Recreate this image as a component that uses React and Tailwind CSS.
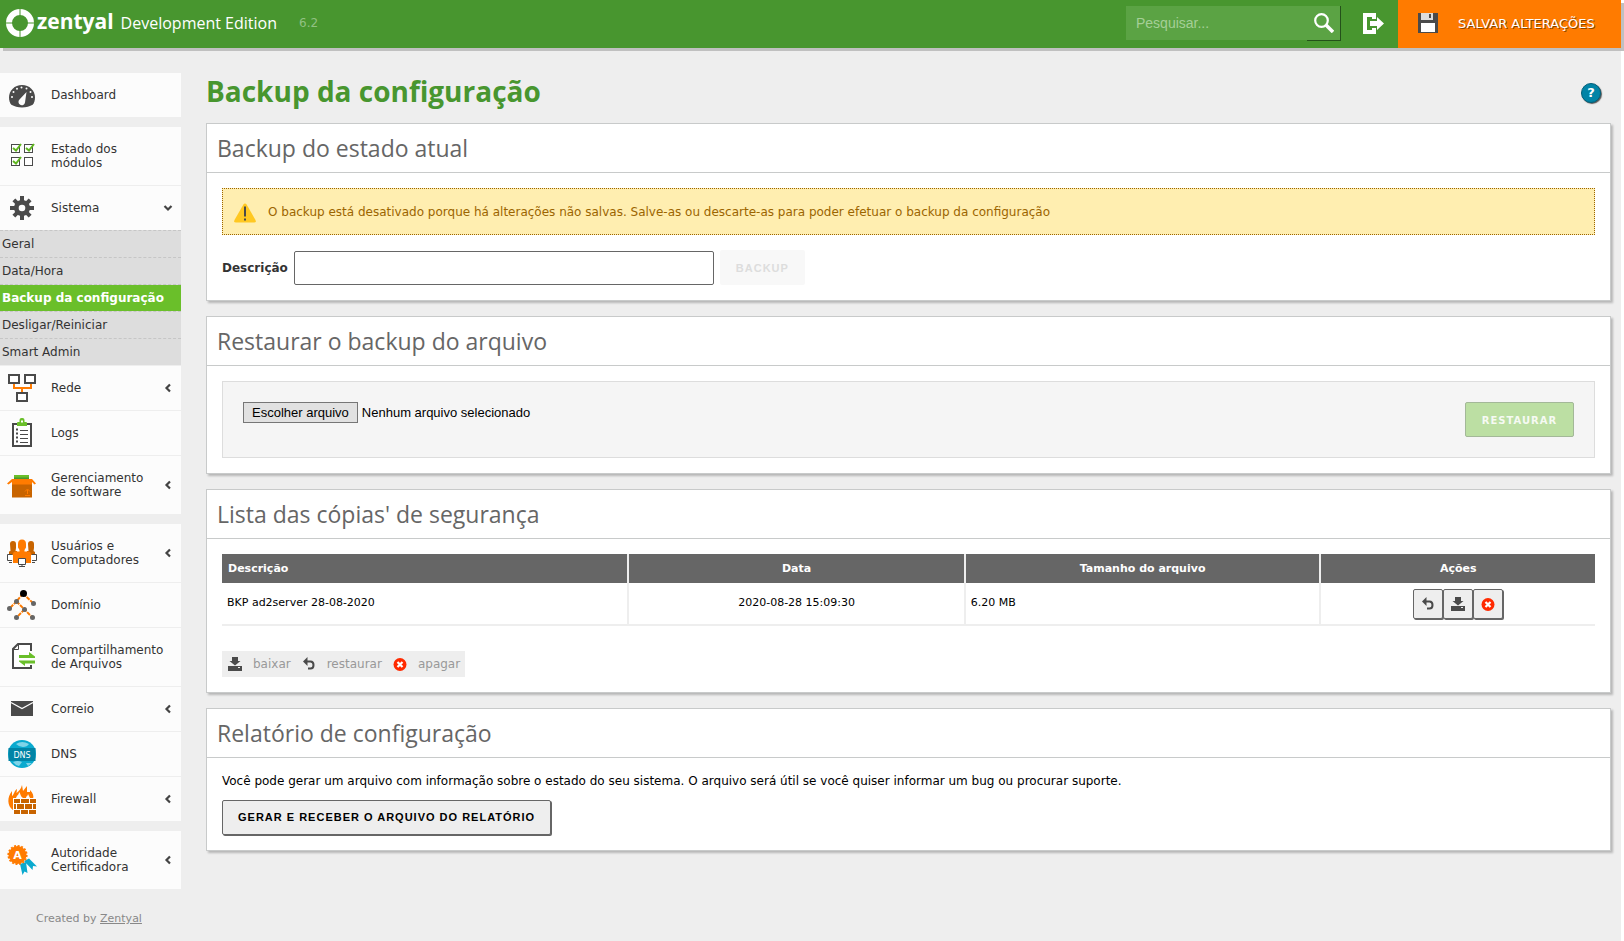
const VERDANA = "font-['DejaVu_Sans',Verdana,sans-serif]";

/* ---------- icons of the side menu, all on a 32px grid ---------- */

function MenuIcon({ children }) {
  return (
    <svg viewBox="0 0 32 32" className="size-8 shrink-0" aria-hidden="true">
      {children}
    </svg>
  );
}

const DashboardIcon = () => (
  <MenuIcon>
    <path d="M16 6C8.600 6 3 11.500 3 18.500c0 3 .8 5.300 2.300 7.200C8 27.200 12 28.500 16 28.500s8-1.300 10.700-2.800c1.500-1.900 2.300-4.200 2.300-7.200C29 11.500 23.400 6 16 6z" fill="#4a4a4a" />
    <g fill="#fcfcfc">
      <circle cx="6" cy="18" r="1" /><circle cx="7.500" cy="13" r="1" /><circle cx="11" cy="9.700" r="1" />
      <circle cx="15.500" cy="8.500" r="1" /><circle cx="20.500" cy="9.500" r="1" /><circle cx="24.500" cy="13" r="1" /><circle cx="26" cy="18" r="1" />
      <path d="M20.500 13l-1.500 10.500a3.300 3.300 0 1 1-5.500-3z" />
    </g>
    <circle cx="15.800" cy="23.300" r="1.200" fill="#fcfcfc" />
  </MenuIcon>
);

const ModulesIcon = () => (
  <MenuIcon>
    <g fill="#fff" stroke="#4a4a4a" strokeWidth="1">
      <rect x="5.500" y="4.500" width="8" height="8" /><rect x="18.500" y="4.500" width="8" height="8" />
      <rect x="5.500" y="17.500" width="8" height="8" /><rect x="18.500" y="17.500" width="8" height="8" />
    </g>
    <g fill="none" stroke="#5fb71f" strokeWidth="2">
      <path d="M7 8l3 2.500 5-6.500M20 8l3 2.500 5-6.500M7 21l3 2.500 5-6.500" />
    </g>
  </MenuIcon>
);

const GearIcon = () => (
  <MenuIcon>
    <g fill="#4a4a4a">
      <rect x="14" y="4" width="4" height="24" /><rect x="4" y="14" width="24" height="4" />
      <rect x="14" y="4.500" width="4" height="23" transform="rotate(45 16 16)" />
      <rect x="14" y="4.500" width="4" height="23" transform="rotate(-45 16 16)" />
      <circle cx="16" cy="16" r="8" />
    </g>
    <circle cx="16" cy="16" r="3.300" fill="#fcfcfc" />
  </MenuIcon>
);

const NetworkIcon = () => (
  <MenuIcon>
    <path d="M8 12v4h17v-4M16 16v4" fill="none" stroke="#ff7b00" strokeWidth="2" />
    <g fill="#fff" stroke="#4a4a4a" strokeWidth="2">
      <rect x="3" y="3" width="10" height="8" /><rect x="19" y="3" width="10" height="8" /><rect x="11" y="21" width="10" height="8" />
    </g>
  </MenuIcon>
);

const LogsIcon = () => (
  <MenuIcon>
    <rect x="7" y="7" width="18" height="22" fill="#fff" stroke="#4a4a4a" strokeWidth="2" />
    <path d="M10 12.500h2M10 16.500h2M10 20.500h2M10 24.500h2" stroke="#4a4a4a" strokeWidth="2" />
    <path d="M14 13.500h8M14 17.500h8M14 21.500h8M14 25.500h8" stroke="#4a4a4a" strokeWidth="1" />
    <path d="M11 9V6q0-1 1-1h1.500V3q0-2 2-2h1q2 0 2 2v2H20q1 0 1 1v3z" fill="#6abf2a" />
    <rect x="15" y="3.500" width="2" height="2" fill="#fff" />
  </MenuIcon>
);

const BoxIcon = () => (
  <MenuIcon>
    <rect x="8" y="6" width="15" height="4" fill="#6abf2a" />
    <rect x="8" y="8.500" width="15" height="1.500" fill="#4a962e" />
    <path d="M6 11h20v17.500H6z" fill="#c86400" />
    <path d="M6 10h20l4 4.500-1.500 1L26 13v2.500H6V13l-3.500 2.500-1.500-1z" fill="#ff7b00" />
    <path d="M21.500 25v-4M19 22.500l2.500-2.500 2.500 2.500M19 26.500h5" stroke="#ff7b00" strokeWidth="1" fill="none" />
  </MenuIcon>
);

const UsersIcon = () => (
  <MenuIcon>
    <path d="M4 7q0-3 3-3t3 3v4l-.5 3H11v4H3v-3.500L4.500 14zM22 7q0-3 3-3t3 3v4l-.5 3 1.500 1v3h-8v-4h1.500z" fill="#c86400" />
    <path d="M12 7q0-4.500 4-4.500T20 7v3.500L18.500 13v1.500h4q2.500 0 2.500 3V26H7v-8.500q0-3 2.500-3h4V13L12 10.500z" fill="#ff7b00" />
    <g fill="#fff" stroke="#4a4a4a">
      <path d="M6 17.500H1.500v6H6M26 17.500h4.500v6H26M12.500 21.500h7v6h-7z" />
      <path d="M3 25.500h3M26 25.500h3M13 29.500h6M16 27.500v2" />
    </g>
  </MenuIcon>
);

const DomainIcon = () => (
  <MenuIcon>
    <path d="M17 4.500l-6.500 8-7 7M17 4.500l10.500 10M10.500 12.500l8 8 8 8M18.500 20.500l-8 8" fill="none" stroke="#ff7b00" strokeWidth="2" strokeDasharray="4 1" />
    <g fill="#666">
      <circle cx="10.500" cy="12.500" r="2.500" /><circle cx="27.500" cy="14.500" r="2.500" /><circle cx="3.500" cy="19.500" r="2.500" />
      <circle cx="18.500" cy="20.500" r="2.500" /><circle cx="10.500" cy="28.500" r="2.500" /><circle cx="26.500" cy="28.500" r="2.500" />
    </g>
    <circle cx="17.500" cy="4.500" r="3.500" fill="#000" />
  </MenuIcon>
);

const ShareIcon = () => (
  <MenuIcon>
    <path d="M25 10V3H12L7 8v19h18v-3" fill="#fff" stroke="#4a4a4a" strokeWidth="2" />
    <path d="M8 8.500h4.500V4" fill="none" stroke="#4a4a4a" strokeWidth="1" />
    <path d="M13 14h10v-3l6 4.500V17H13zM29 22.500H19V25l-6-4.500V19.500h16z" fill="#6abf2a" />
  </MenuIcon>
);

const MailIcon = () => (
  <MenuIcon>
    <rect x="5" y="8" width="22" height="15" fill="#4a4a4a" />
    <path d="M5 9.500l11 6 11-6" fill="none" stroke="#fff" strokeWidth="1.200" />
  </MenuIcon>
);

const DnsIcon = () => (
  <MenuIcon>
    <circle cx="16" cy="16" r="14" fill="#0aaacf" />
    <path d="M10 6q6-4 13 0-2 3-6 3t-7-3zM7 24q5-2 9 0l-3 4q-4-1-6-4zM20 25h6l-4 3z" fill="#7fd4e8" />
    <rect x="2.500" y="10" width="27" height="13" fill="#0184a6" />
    <text x="16" y="19.500" textAnchor="middle" fill="#fff" className="font-['DejaVu_Sans',sans-serif] text-[8px]">DNS</text>
  </MenuIcon>
);

const FirewallIcon = () => (
  <MenuIcon>
    <path d="M7 27C1 23 1 14 6 8v5c2-1 2-5 5-7l-.5 4C13 8 15 6 16 2l1 6 4-5v6l3 0 0-2c3 3 4 6 3 9H8z" fill="#ff7b00" />
    <path d="M10 15c1-3 3-3 3-6 2 2 1 4 4 6zM20 15c0-2 2-2 2-4l2 4z" fill="#fcfcfc" />
    <rect x="7" y="15" width="24" height="16.500" fill="#fff" />
    <path d="M8 16h6v4H8zM15 16h8v4h-8zM24 16h6v4h-6zM8 21h2v5H8zM11 21h7v5h-7zM19 21h7v5h-7zM27 21h3v5h-3zM8 27h6v4H8zM15 27h7v4h-7zM23 27h7v4h-7z" fill="#c86400" />
  </MenuIcon>
);

const CertificateIcon = () => (
  <MenuIcon>
    <path d="M14 20l6-2 1.500 11-3-1.500L16.500 31zM18 17l5-2.500 8 8-4-.5-.5 4z" fill="#0aaacf" />
    <circle cx="11.500" cy="11" r="9" fill="#ff7b00" />
    <circle cx="11.500" cy="11" r="9.200" fill="none" stroke="#ff7b00" strokeWidth="1.800" strokeDasharray="2 1.600" />
    <text x="11.500" y="15" textAnchor="middle" fill="#fff" className="font-['DejaVu_Sans',sans-serif] text-[11px] font-bold">A</text>
  </MenuIcon>
);

/* ---------- icons of the header and the actions ---------- */

const LogoRing = () => (
  <svg viewBox="0 0 30 30" className="size-[30px] shrink-0" aria-hidden="true">
    <circle cx="15" cy="15" r="11" fill="none" stroke="#fff" strokeWidth="6" />
    <path d="M15 0v8M15 22v8M0 15h8M22 15h8" stroke="#48962f" strokeWidth="1" />
  </svg>
);

const RestoreIcon = () => (
  <svg viewBox="0 0 16 16" className="size-4" aria-hidden="true">
    <path d="M2 5.500L6.500 1v9z" fill="#4a4a4a" />
    <path d="M5 5.500h4.500q3 0 3 3.500t-3 3.500H7" fill="none" stroke="#4a4a4a" strokeWidth="2" />
  </svg>
);

const DownloadIcon = () => (
  <svg viewBox="0 0 16 16" className="size-4" aria-hidden="true">
    <path d="M5 1h6v4h2.500L8 9.500 2.500 5H5zM1 10h14v5H1z" fill="#4a4a4a" />
    <rect x="11" y="11" width="2" height="1" fill="#eee" />
  </svg>
);

const DeleteIcon = () => (
  <svg viewBox="0 0 16 16" className="size-4" aria-hidden="true">
    <circle cx="8" cy="8.500" r="6.500" fill="#ff2a00" />
    <path d="M5.500 6l5 5M10.500 6l-5 5" stroke="#fff" strokeWidth="2.200" />
  </svg>
);

const Chevron = ({ open }) => (
  <svg viewBox="0 0 10 10" className="size-[10px] shrink-0" aria-hidden="true">
    <path d={open ? "M1.500 3l3.500 3.500L8.500 3" : "M7 1.500L3.500 5 7 8.500"} fill="none" stroke="#444" strokeWidth="2.200" />
  </svg>
);

/* ---------- side menu ---------- */

const MENU = [
  [{ label: "Dashboard", icon: DashboardIcon }],
  [
    { label: "Estado dos módulos", icon: ModulesIcon, tall: true },
    {
      label: "Sistema",
      icon: GearIcon,
      open: true,
      children: ["Geral", "Data/Hora", "Backup da configuração", "Desligar/Reiniciar", "Smart Admin"],
    },
    { label: "Rede", icon: NetworkIcon, more: true },
    { label: "Logs", icon: LogsIcon },
    { label: "Gerenciamento de software", icon: BoxIcon, more: true, tall: true },
  ],
  [
    { label: "Usuários e Computadores", icon: UsersIcon, more: true, tall: true },
    { label: "Domínio", icon: DomainIcon },
    { label: "Compartilhamento de Arquivos", icon: ShareIcon, tall: true },
    { label: "Correio", icon: MailIcon, more: true },
    { label: "DNS", icon: DnsIcon },
    { label: "Firewall", icon: FirewallIcon, more: true },
  ],
  [{ label: "Autoridade Certificadora", icon: CertificateIcon, more: true, tall: true }],
];

const CURRENT = "Backup da configuração";

function MenuItem({ item }) {
  const Icon = item.icon;
  return (
    <li>
      <a href="#" className={`flex items-center bg-[#fcfcfc] pl-[6px] pr-2 ${item.tall ? "h-[58px]" : "h-11"}`}>
        <Icon />
        <span className="ml-[13px] w-[108px] shrink-0 leading-[14px]">{item.label}</span>
        {(item.more || item.open) && (
          <span className="ml-1">
            <Chevron open={item.open} />
          </span>
        )}
      </a>
      {item.children && (
        <ul>
          {item.children.map((c) => (
            <li key={c} className="border-t border-dashed border-[#c6c6c6] bg-[#ddd]">
              <a
                href="#"
                className={`block h-[26px] pl-[2px] leading-[26px] whitespace-nowrap ${c === CURRENT ? "bg-[#6abf2a] font-bold text-white" : ""}`}
              >
                {c}
              </a>
            </li>
          ))}
        </ul>
      )}
    </li>
  );
}

function Sidebar() {
  return (
    <nav className="w-[181px] shrink-0 pt-[25px] text-[#333]">
      <div className="flex flex-col gap-[10px]">
        {MENU.map((group, i) => (
          <ul key={i} className="flex flex-col gap-px">
            {group.map((item) => (
              <MenuItem key={item.label} item={item} />
            ))}
          </ul>
        ))}
      </div>
      <p className="mt-[22px] pl-9 text-[11px] leading-4 text-[#888]">
        Created by <a href="#" className="underline">Zentyal</a>
      </p>
    </nav>
  );
}

/* ---------- header ---------- */

function Header() {
  return (
    <header className="flex h-12 items-stretch bg-[#48962f] text-white shadow-[3px_3px_0_#c0c0c0]">
      <div className="flex items-center pb-[3px] pl-[5px]">
        <LogoRing />
        <span className="ml-[2px] pb-1 font-['Open_Sans',sans-serif] text-[21px] font-bold leading-6">zentyal</span>
        <span className="ml-[7px] font-['Open_Sans','Trebuchet_MS',sans-serif] text-[16px] leading-6">Development Edition</span>
        <span className="ml-[22px] text-[12px] leading-6 text-[#91c182]">6.2</span>
      </div>
      <form className="ml-auto flex pt-[6px]" role="search">
        <input
          aria-label="Pesquisar"
          placeholder="Pesquisar..."
          className="h-[34px] w-[181px] bg-[#5ba344] px-[10px] font-['Liberation_Sans',Arial,sans-serif] text-[14px] text-white outline-none placeholder:text-[#a5cf97]"
        />
        <button type="button" aria-label="Pesquisar" className="flex h-[35px] w-[34px] items-center justify-center border-r border-b border-[#24511a] bg-[#5ba344]">
          <svg viewBox="0 0 20 20" className="size-5" fill="none" stroke="#fff" aria-hidden="true">
            <circle cx="7.500" cy="7.500" r="6.300" strokeWidth="2.200" />
            <path d="M12 12l7 7" strokeWidth="3.500" />
          </svg>
        </button>
      </form>
      <a href="#" aria-label="Sair" className="ml-[22px] flex w-[35px] items-center pb-px">
        <svg viewBox="0 0 21 21" className="size-[21px]" fill="#fff" aria-hidden="true">
          <path d="M0 0h13v6H9V4H4v13h5v-2h4v6H0z" />
          <path d="M7 8h7V4l7 6.500L14 17v-4H7z" />
        </svg>
      </a>
      <button type="button" className="flex w-[223px] items-center bg-[#ff7b00] pl-5 text-[13px]">
        <svg viewBox="0 0 20 20" className="mr-5 mb-[2px] size-5" aria-hidden="true">
          <path d="M0 0h20v20H0z" fill="#4a4a4a" />
          <path d="M3 0h12v7H3z" fill="#ddd" />
          <path d="M11 1h2v4h-2z" fill="#4a4a4a" />
          <path d="M3 10h14v9H3z" fill="#fff" />
        </svg>
        <span className="[text-shadow:1px_1px_0_#8a4300]">SALVAR ALTERAÇÕES</span>
      </button>
    </header>
  );
}

/* ---------- panels ---------- */

function Panel({ title, children }) {
  return (
    <section className="border border-[#c8caca] bg-white shadow-[2px_2px_2px_#b8b8b8]">
      <h2 className="border-b border-[#c8caca] pl-[10px] font-['Open_Sans','Trebuchet_MS',sans-serif] text-[23px] leading-[48px] text-[#666]">
        {title}
      </h2>
      <div className="p-[15px]">{children}</div>
    </section>
  );
}

const TH = "h-[29px] bg-[#666] pt-[2px] text-[11px] font-bold text-white";
const SEP = "border-r-2 border-[#eee]";
const ACTION =
  "flex h-[30px] w-[30px] items-center justify-center rounded-[2px] border border-[#666] bg-[#eee] shadow-[1px_1px_0_#666]";

function BackupTable() {
  return (
    <table className="w-full table-fixed border-collapse text-[11px] text-black">
      <colgroup>
        <col className="w-[29.600%]" />
        <col className="w-[24.500%]" />
        <col className="w-[25.900%]" />
        <col />
      </colgroup>
      <thead>
        <tr>
          <th className={`${TH} ${SEP} pl-[6px] text-left`}>Descrição</th>
          <th className={`${TH} ${SEP}`}>Data</th>
          <th className={`${TH} ${SEP}`}>Tamanho do arquivo</th>
          <th className={TH}>Ações</th>
        </tr>
      </thead>
      <tbody>
        <tr className="h-[42px] border-b-2 border-[#eee]">
          <td className={`${SEP} pl-[5px]`}>BKP ad2server 28-08-2020</td>
          <td className={`${SEP} text-center`}>2020-08-28 15:09:30</td>
          <td className={`${SEP} pl-[5px]`}>6.20 MB</td>
          <td>
            <div className="flex justify-center">
              <button type="button" aria-label="restaurar" className={ACTION}><RestoreIcon /></button>
              <button type="button" aria-label="baixar" className={ACTION}><DownloadIcon /></button>
              <button type="button" aria-label="apagar" className={ACTION}><DeleteIcon /></button>
            </div>
          </td>
        </tr>
      </tbody>
    </table>
  );
}

export default function App() {
  return (
    <div className="min-h-screen bg-white pr-[3px]">
      <div className={`min-h-screen bg-[#eee] text-[12px] ${VERDANA}`}>
        <Header />
        <div className="flex">
          <Sidebar />
          <main className="min-w-0 flex-1 pr-[10px] pl-[25px]">
            <div className="flex h-[75px] items-center justify-between pr-[10px] pt-[10px]">
              <h1 className="font-['Open_Sans','Trebuchet_MS',sans-serif] text-[28px] font-bold leading-9 text-[#48962f]">Backup da configuração</h1>
              <button type="button" aria-label="Ajuda" className="mt-1 flex size-5 items-center justify-center rounded-full border border-[#01607a] bg-[#0184a6] text-[13px] font-bold leading-none text-white shadow-[1px_1px_1px_#555]">
                ?
              </button>
            </div>
            <div className="flex flex-col gap-[15px]">
              <Panel title="Backup do estado atual">
                <div className="flex h-[47px] items-center border border-dotted border-[#9c6500] bg-[#ffeeb0] pl-[11px] text-[#9c6500]">
                  <svg viewBox="0 0 22 20" className="mr-3 mt-[2px] h-5 w-[22px]" aria-hidden="true">
                    <path d="M11 0.500q1 0 1.600 1L21.500 17q1 2.500-1.500 2.500H2Q-.5 19.500.5 17L9.400 1.500Q10 .5 11 .500z" fill="#ffc822" />
                    <path d="M10 3.500h2v10h-2zM10 15.500h2v2h-2z" fill="#4a4a4a" />
                  </svg>
                  O backup está desativado porque há alterações não salvas. Salve-as ou descarte-as para poder efetuar o backup da configuração
                </div>
                <form className="mt-[15px] flex items-center">
                  <label htmlFor="description" className="font-bold text-[#333]">Descrição</label>
                  <input id="description" className="ml-[6px] h-[34px] w-[420px] rounded-[2px] border border-[#666] bg-white px-2" />
                  <button type="button" disabled className="ml-[6px] h-[35px] w-[85px] rounded-[2px] bg-[#f8f8f8] pt-px font-['Liberation_Sans',Arial,sans-serif] text-[11px] font-bold tracking-[1px] text-[#ddd]">
                    BACKUP
                  </button>
                </form>
              </Panel>

              <Panel title="Restaurar o backup do arquivo">
                <form className="flex items-start justify-between border border-[#ddd] bg-[#f5f5f5] p-5">
                  <label htmlFor="file" className="flex items-center gap-1 font-['Liberation_Sans',Arial,sans-serif] text-[13px] text-black">
                    <input id="file" type="file" className="sr-only" />
                    <span className="border border-[#767676] bg-[#e1e1e1] px-2 leading-[19px]">Escolher arquivo</span>
                    Nenhum arquivo selecionado
                  </label>
                  <button type="button" disabled className="h-[35px] w-[109px] rounded-[2px] border border-[#a3b898] bg-[#bcdfa3] pt-[2px] text-[10px] font-bold tracking-[1px] text-[#f6faf3]">
                    RESTAURAR
                  </button>
                </form>
              </Panel>

              <Panel title="Lista das cópias' de segurança">
                <BackupTable />
                <div className="mt-[25px] flex">
                  <ul className="flex h-[26px] items-center bg-[#eee] px-[5px] pb-px text-[#999]">
                    <li className="flex items-center gap-[10px]"><DownloadIcon />baixar</li>
                    <li className="ml-[10px] flex items-center gap-[10px]"><RestoreIcon />restaurar</li>
                    <li className="ml-[10px] flex items-center gap-[10px]"><DeleteIcon />apagar</li>
                  </ul>
                </div>
              </Panel>

              <Panel title="Relatório de configuração">
                <p className="leading-4 text-black">
                  Você pode gerar um arquivo com informação sobre o estado do seu sistema. O arquivo será útil se você quiser informar um bug ou procurar suporte.
                </p>
                <button type="button" className="mt-[11px] h-[35px] rounded-[2px] border border-[#666] bg-[#eee] px-[15px] font-['Liberation_Sans',Arial,sans-serif] text-[11px] font-bold tracking-[1px] text-black shadow-[1px_1px_0_#666]">
                  GERAR E RECEBER O ARQUIVO DO RELATÓRIO
                </button>
              </Panel>
            </div>
          </main>
        </div>
      </div>
    </div>
  );
}
